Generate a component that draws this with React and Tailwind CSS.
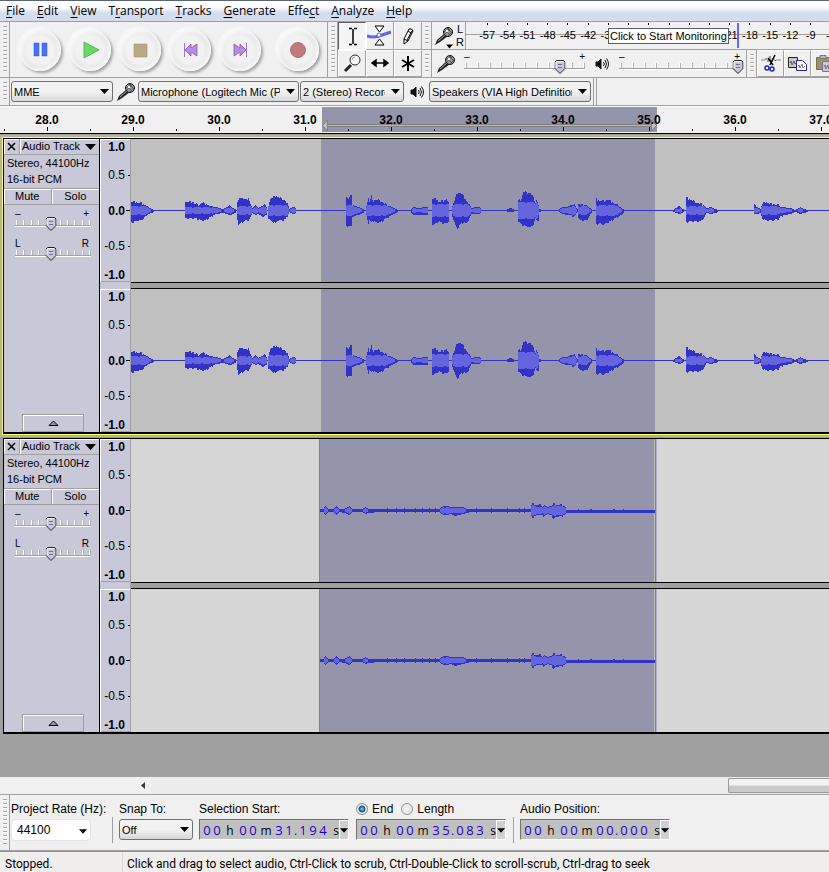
import { useState } from 'react';

const menus = [
  ['', 'F', 'ile'],
  ['', 'E', 'dit'],
  ['', 'V', 'iew'],
  ['T', 'r', 'ansport'],
  ['', 'T', 'racks'],
  ['', 'G', 'enerate'],
  ['Effe', 'c', 't'],
  ['', 'A', 'nalyze'],
  ['', 'H', 'elp'],
];

// each burst: cap of the rms part, then [x, up, down] points of the peak envelope
const speech = [
  { rms: 4, points: [[0, 8, 11], [5, 8, 10], [6, 7, 9], [10, 7, 9], [13, 5, 6], [17, 3, 3], [20, 1, 2], [23, 0, 1]] },
  { rms: 3, points: [[54, 8, 7], [62, 8, 7], [63, 6, 7], [68, 5, 8], [70, 7, 9], [74, 6, 9], [78, 4, 6], [85, 3, 3], [91, 1, 2], [96, 3, 3], [98, 5, 4], [100, 3, 4], [105, 0, 1]] },
  { rms: 4, points: [[106, 8, 8], [107, 9, 13], [109, 13, 12], [112, 11, 10], [115, 10, 9], [117, 12, 9], [119, 6, 6], [121, 2, 2], [124, 5, 4], [127, 2, 3], [131, 4, 5], [133, 6, 5], [136, 2, 3]] },
  { rms: 5, points: [[137, 5, 7], [139, 11, 9], [144, 14, 12], [146, 13, 9], [151, 11, 9], [154, 9, 8], [157, 4, 3], [158, 1, 1], [161, 3, 3], [163, 3, 3], [165, 0, 1]] },
  { rms: 5, points: [[215, 13, 15], [217, 11, 14], [219, 14, 15], [220, 14, 15], [221, 5, 5], [227, 3, 4], [233, 0, 1]] },
  { rms: 5, points: [[235, 4, 4], [237, 12, 12], [238, 8, 9], [240, 14, 11], [241, 9, 9], [245, 10, 11], [249, 9, 11], [253, 6, 8], [258, 4, 5], [264, 1, 2], [267, 0, 1]] },
  { rms: 3, points: [[280, 1, 2], [282, 3, 4], [287, 2, 4], [294, 3, 4], [296, 3, 4], [297, 0, 1]] },
  { rms: 6, points: [[301, 11, 13], [305, 11, 12], [307, 8, 10], [312, 9, 12], [315, 11, 12], [317, 7, 10], [318, 1, 1]] },
  { rms: 6, points: [[321, 4, 5], [324, 12, 14], [326, 17, 17], [329, 17, 13], [332, 14, 11], [335, 9, 12], [338, 5, 7], [340, 2, 3], [346, 3, 3], [348, 3, 3], [350, 0, 1]] },
  { rms: 1, points: [[376, 1, 1], [380, 2, 1], [383, 0, 1]] },
  { rms: 8, points: [[387, 9, 10], [390, 11, 13], [392, 18, 14], [396, 17, 15], [399, 17, 16], [402, 12, 13], [404, 7, 7], [405, 10, 9], [407, 5, 9], [408, 1, 1], [410, 0, 1]] },
  { rms: 4, points: [[428, 1, 1], [431, 3, 3], [436, 3, 4], [439, 5, 4], [443, 5, 5], [445, 2, 2], [446, 1, 1], [447, 6, 6], [449, 5, 9], [455, 5, 9], [457, 3, 6], [460, 1, 2], [461, 0, 1]] },
  { rms: 5, points: [[465, 11, 13], [468, 9, 12], [472, 9, 13], [477, 10, 11], [482, 7, 8], [487, 4, 5], [491, 1, 3], [493, 0, 1]] },
  { rms: 2, points: [[542, 0, 1], [546, 3, 2], [548, 4, 3], [550, 2, 2], [553, 0, 1]] },
  { rms: 4, points: [[555, 12, 11], [558, 11, 10], [563, 8, 10], [569, 6, 10], [573, 4, 6], [575, 2, 2], [580, 3, 3], [583, 1, 2], [587, 0, 1]] },
  { rms: 4, points: [[623, 6, 3], [625, 3, 3], [629, 1, 2], [631, 6, 7], [634, 8, 9], [639, 6, 9], [647, 5, 8], [649, 3, 5], [659, 2, 3], [664, 0, 1], [669, 3, 3], [672, 1, 2], [677, 0, 1]] },
];

const quiet = [
  { rms: 3, points: [[189, 1, 1], [192, 1, 1], [194, 4, 4], [197, 1, 1], [202, 1, 1], [205, 4, 4], [208, 1, 1], [213, 1, 2], [218, 4, 4], [221, 1, 1], [231, 1, 1], [234, 3, 3], [237, 1, 2], [247, 1, 1]] },
  { rms: 0, points: [[247, 1, 1], [308, 1, 1]] },
  { rms: 3, points: [[308, 1, 1], [310, 3, 3], [314, 4, 4], [320, 3, 3], [323, 3, 5], [331, 3, 3], [335, 1, 2], [340, 1, 1]] },
  { rms: 0, points: [[336, 1, 1], [399, 1, 1]] },
  { rms: 5, points: [[399, 1, 1], [400, 5, 5], [402, 6, 6], [405, 5, 4], [409, 5, 4], [411, 3, 4], [413, 5, 5], [416, 3, 3], [420, 4, 4], [422, 6, 7], [426, 5, 5], [431, 5, 5], [434, 3, 3], [435, 1, 1]] },
  { rms: 0, points: [[435, 0, 2], [524, 0, 2]] },
];

// lone pixels that stick out of the noise floor
const specks = [256, 265, 273, 284, 291, 298, 304, 345, 360, 376, 388, 393, 447, 459, 460, 482, 483, 492];

function columnsOf({ rms, points }) {
  const cols = [];
  for (let i = 0; i < points.length - 1; i++) {
    const [x0, u0, d0] = points[i];
    const [x1, u1, d1] = points[i + 1];
    for (let x = x0; x < x1; x++) {
      const t = (x - x0) / (x1 - x0);
      let up = Math.round(u0 + (u1 - u0) * t);
      let down = Math.round(d0 + (d1 - d0) * t);
      const inner = Math.max(0, Math.min(rms - (x % 9 > 6 ? 1 : 0), up - 1, down - 1));
      if (up > 4) up += [0, 0, 1, 1, -1, 0, 0][x % 7];
      if (down > 4) down += [0, 1, 1, 0, 0][x % 5];
      cols.push({ x, up, down, inner });
    }
  }
  return cols;
}

const pathOf = (cols, up, down) =>
  cols.map((c) => `M${c.x} ${71 - up(c)}h1V${72 + down(c)}h-1z`).join('');

const speechCols = speech.flatMap(columnsOf);
const quietCols = [
  ...quiet.flatMap(columnsOf),
  ...specks.map((x) => ({ x, up: x > 435 ? 1 : 2, down: 2, inner: 0 })),
];

function Wave({ cols, selected, line }) {
  return (
    <svg className="block w-full h-[143px]" shapeRendering="crispEdges" aria-hidden="true">
      <rect x={selected[0]} width={selected[1] - selected[0]} height="143" fill="#9494aa" />
      {!line && (
        <>
          <rect x="188" width="1" height="143" fill="#808080" />
          <rect x="523" width="1" height="143" fill="#c0c0c0" />
          <rect x="524" width="1" height="143" fill="#808080" />
          <rect x="525" width="1" height="143" fill="#b0b0c0" />
        </>
      )}
      {line && <rect y="71" width="100%" height="1" fill="#3232c8" />}
      <path d={pathOf(cols, (c) => c.up, (c) => c.down)} fill="#3232c8" />
      <path d={pathOf(cols.filter((c) => c.inner > 0), (c) => c.inner, (c) => c.inner)} fill="#6464dc" />
    </svg>
  );
}

function Grip() {
  return (
    <div className="w-[10px] shrink-0 self-stretch py-1 pl-[3px] pr-[2px] border-r border-[#a0a0a0]">
      <div className="h-full bg-[repeating-linear-gradient(to_bottom,#a8a8a8_0px,#a8a8a8_1px,#ffffff_1px,#ffffff_2px,#f0f0f0_2px,#f0f0f0_4px)]" />
    </div>
  );
}

function Mic() {
  return (
    <svg className="shrink-0" width="20" height="20" viewBox="0 0 20 20" aria-hidden="true">
      <path d="M1 19 L3 14 L11 7 L14 10 L6 16 Z" fill="#222" />
      <path d="M4 15 L11 9" stroke="#aaa" strokeWidth="1" />
      <circle cx="14" cy="6" r="4.5" fill="#999" stroke="#111" />
      <path d="M11 4l5 5M13 2l5 5M11 8l6-6M10 6l5-4M14 10l4-4" stroke="#333" strokeWidth=".7" />
      <circle cx="13" cy="5" r="1.3" fill="#eee" />
    </svg>
  );
}

function Speaker() {
  return (
    <svg className="shrink-0" width="14" height="14" viewBox="0 0 14 14" fill="none" stroke="#111" aria-hidden="true">
      <path d="M1 5h2l3-3v10l-3-3H1z" fill="#111" />
      <path d="M8.500 5q1.500 2 0 4M10 3q3 4 0 8M11.500 1.500q4 5.500 0 11" />
    </svg>
  );
}

function Caret({ className }) {
  return (
    <svg className={className} width="9" height="5" viewBox="0 0 9 5" aria-hidden="true">
      <path d="M0 0h9L4.500 5z" fill="#000" />
    </svg>
  );
}

function Combo({ label, value, className }) {
  return (
    <div className={`relative shrink-0 ${className}`}>
      <select
        aria-label={label}
        className="block w-full h-[21px] pl-[2px] pr-[18px] appearance-none rounded-[3px] border border-[#707070] bg-linear-to-b from-[#f2f2f2] from-50% to-[#d8d8d8] to-100% font-[Liberation_Sans,Arial,sans-serif] text-[11px] leading-[18px] text-black overflow-hidden"
      >
        <option>{value}</option>
      </select>
      <Caret className="absolute right-1 top-2 pointer-events-none" />
    </div>
  );
}

const round = {
  Pause: <path d="M13 12h5v13h-5zM21 12h5v13h-5z" fill="#4a72f0" stroke="#2f50d0" strokeWidth=".5" />,
  Play: <path d="M13 11v16l15-8z" fill="#6cd868" stroke="#4aa84a" strokeWidth=".8" />,
  Stop: <path d="M13 13h13v13H13z" fill="#b9aa86" stroke="#a09070" strokeWidth=".6" />,
  'Skip to Start': <path d="M13.500 12v14M20 13l-6 6 6 6v-4l6 4V13l-6 4z" fill="#b98ae0" stroke="#8658b8" strokeWidth=".8" />,
  'Skip to End': <path d="M25.500 12v14M19 13l6 6-6 6v-4l-6 4V13l6 4z" fill="#b98ae0" stroke="#8658b8" strokeWidth=".8" />,
  Record: <circle cx="19" cy="19" r="7.500" fill="#c07c7c" stroke="#a06060" strokeWidth=".8" />,
};

function RoundButton({ name, onClick }) {
  return (
    <button
      aria-label={name}
      onClick={onClick}
      className="w-[42px] h-[42px] rounded-full bg-radial from-[#f2f2f2] from-45% to-[#e4e4e4] to-62% shadow-[2px_2px_3px_#a0a0a0,-1px_-1px_3px_#ffffff,inset_3px_3px_4px_#fafafa,inset_-2px_-2px_4px_#fafafa]"
    >
      <svg width="42" height="42" viewBox="-2 -2 42 42">{round[name]}</svg>
    </button>
  );
}

const tools = [
  ['Selection Tool', <path d="M10 5.500h3M15 5.500h3M14 6v15M10 21.500h3M15 21.500h3" fill="none" stroke="#000" strokeWidth="1.500" />],
  ['Envelope Tool', (
    <>
      <path d="M0 13q6 2 12 0t12-4" fill="none" stroke="#6464dc" strokeWidth="3" />
      <path d="M8 3h9l-4.500 6zM8 22h9l-4.500-6z" fill="#fff" stroke="#000" />
      <circle cx="12" cy="12" r="2" fill="#fff" stroke="#6464dc" />
    </>
  )],
  ['Draw Tool', <path d="M9 21v-5l5-10q3-1 4 2l-5 10zM9 16l4 2M13 8l3 2M12 17l5-9" fill="#fff" stroke="#000" />],
  ['Zoom Tool', (
    <>
      <path d="M6 21l6-6" stroke="#222" strokeWidth="3" />
      <circle cx="16" cy="10" r="5" fill="#fff" stroke="#222" />
      <path d="M13 10q0-3 3-3" fill="none" stroke="#999" />
    </>
  )],
  ['Time Shift Tool', <path d="M6 13h13M9 10l-4 3 4 3zM17 10l4 3-4 3z" fill="#000" stroke="#000" strokeWidth="1.500" />],
  ['Multi-Tool', <path d="M13 6v15M7 10l12 7M19 10L7 17" stroke="#000" strokeWidth="2" />],
];

function Slider({ label, start, right, ticks, min = '–', max = '+', className }) {
  const [value, setValue] = useState(start);
  return (
    <div className={`relative h-6 shrink-0 text-[10px] leading-[10px] ${className}`}>
      <div className="flex justify-between">
        <span>{min}</span>
        <span className={right}>{max}</span>
      </div>
      <div className="absolute inset-x-0 top-[11px] h-[5px] flex justify-between px-px">
        {Array.from({ length: ticks }, (_, i) => (
          <i key={i} className="w-px h-full bg-white shadow-[1px_0_0_#b4b4b4]" />
        ))}
      </div>
      <div className="absolute inset-x-0 top-[16px] h-[2px] bg-[#a0a0a0] border-b border-white" />
      <div className="absolute inset-x-0 top-[8px]">
        <svg className="-translate-x-1/2 relative" style={{ left: `${value}%` }} width="11" height="14" viewBox="0 0 11 14">
          <path d="M2 .5h7L10.500 2v6.500l-5 5-5-5V2z" fill="#c8c8dc" stroke="#222" />
          <path d="M1.500 8V2.500L2.500 1.500h6" fill="none" stroke="#fff" />
          <path d="M3.500 4.500h4M3.500 7.500h4" stroke="#70708a" />
        </svg>
      </div>
      <input
        type="range"
        aria-label={label}
        value={value}
        onChange={(e) => setValue(Number(e.target.value))}
        className="absolute inset-0 w-full h-full opacity-0"
      />
    </div>
  );
}

function RecordMeter() {
  const marks = Array.from({ length: 18 }, (_, i) => -57 + i * 3);
  return (
    <div className="flex items-center h-7 border-b border-[#a0a0a0]">
      <Grip />
      <div className="relative flex items-center gap-[2px] w-[33px] shrink-0 pl-[2px]">
        <Mic />
        <Caret className="absolute left-[14px] bottom-0 w-[7px]" />
        <div className="flex flex-col items-center text-[11px] leading-[13px]">
          <span>L</span>
          <span>R</span>
        </div>
      </div>
      <div className="relative flex-1 h-full min-w-0 border-l border-[#a0a0a0]">
        <div className="h-[13px] border-b border-[#a0a0a0]" />
        <div className="absolute inset-y-0 left-[11px] w-[364px] flex text-[11px] leading-[26px]">
          {marks.map((m) => (
            <span key={m} className="flex-1 text-center bg-[linear-gradient(#000,#000)] bg-[length:1px_2px] bg-position-[50%_1px] bg-no-repeat">
              {m}
            </span>
          ))}
        </div>
        <div className="absolute left-[271px] top-px w-[2px] h-[25px] bg-[#6464ff]" />
        <button className="absolute left-[142px] top-[6px] h-[16px] px-px border border-[#606060] bg-white text-[11px] leading-[14px] whitespace-nowrap">
          Click to Start Monitoring
        </button>
      </div>
    </div>
  );
}

const edits = [
  ['Cut', (
    <>
      <path d="M1 7h4l1-2 2 4 2-6 1 6 2-4 2 3 1-1h5" fill="none" stroke="#888" />
      <path d="M15 2l-5 10M8 5l5 7" stroke="#000" strokeWidth="1.500" />
      <circle cx="7" cy="15" r="2" fill="none" stroke="#2020c0" strokeWidth="1.500" />
      <circle cx="12" cy="16" r="2" fill="none" stroke="#2020c0" strokeWidth="1.500" />
    </>
  )],
  ['Copy', (
    <>
      <path d="M1.500 4.500h9v10h-9z" fill="#c8c8c8" stroke="#222" />
      <path d="M3 10l1-2 1 4 2-4 1 3 1-1" fill="none" stroke="#444" strokeWidth=".8" />
      <path d="M9.500 7.500h6l4 4v6h-10z" fill="#fff" stroke="#2020c0" />
      <path d="M11 13l1-1 1 3 2-4 1 4 2-2" fill="none" stroke="#555" strokeWidth=".8" />
    </>
  )],
  ['Paste', (
    <>
      <path d="M2.500 4.500h13v12h-13z" fill="#9a9270" stroke="#77704f" />
      <path d="M6 2.500h6v3H6z" fill="#bbb" stroke="#777" />
      <path d="M8.500 8.500h8l3 3v7h-11z" fill="#c8c8d0" stroke="#77779a" />
      <path d="M10 14l1-2 1 4 2-4 1 4 2-3" fill="none" stroke="#777" />
    </>
  )],
];

function Toolbars() {
  const [tool, setTool] = useState('Selection Tool');
  return (
    <div className="flex h-14 border-b border-[#a0a0a0] overflow-hidden">
      <Grip />
      <div className="flex items-center gap-2 pl-[9px] w-[318px] shrink-0 border-r border-[#a0a0a0]">
        {['Pause', 'Play', 'Stop', 'Skip to Start', 'Skip to End'].map((name) => (
          <RoundButton key={name} name={name} />
        ))}
        <div className="pl-2 flex">
          <RoundButton name="Record" />
        </div>
      </div>
      <div className="flex">
        <Grip />
      </div>
      <div className="grid grid-cols-3 grid-rows-2 w-[84px] shrink-0">
        {tools.map(([name, icon]) => (
          <button
            key={name}
            aria-label={name}
            onClick={() => setTool(name)}
            className={`flex items-center justify-center border ${
              tool === name
                ? 'border-t-[#606060] border-l-[#606060] border-r-white border-b-white bg-[#f4f4f4]'
                : 'border-t-white border-l-white border-r-[#a0a0a0] border-b-[#a0a0a0]'
            }`}
          >
            <svg width="26" height="26" viewBox="0 0 26 26">{icon}</svg>
          </button>
        ))}
      </div>
      <div className="flex-1 min-w-0">
        <RecordMeter />
        <div className="flex items-center h-[27px]">
          <Grip />
          <div className="flex w-8 shrink-0 pl-1">
            <Mic />
          </div>
          <Slider label="Recording Volume" start={79} ticks={11} className="w-[121px]" />
          <div className="w-[34px] shrink-0 flex justify-center">
            <Speaker />
          </div>
          <Slider label="Playback Volume" start={98} ticks={11} className="w-[121px]" />
          <div className="ml-[6px] flex self-stretch border-l border-[#a0a0a0]">
            <Grip />
          </div>
          {edits.map(([name, icon]) => (
            <button key={name} aria-label={name} className="w-[27px] h-full shrink-0 flex items-center justify-center border border-t-white border-l-white border-r-[#a0a0a0] border-b-[#a0a0a0]">
              <svg className="shrink-0" width="21" height="21" viewBox="0 0 21 21">{icon}</svg>
            </button>
          ))}
        </div>
      </div>
    </div>
  );
}

function DeviceBar() {
  return (
    <div className="flex items-center h-7 border-b border-[#a0a0a0]">
      <Grip />
      <div className="flex items-center h-full pl-px pr-[2px] border-r border-[#a0a0a0]">
        <Combo label="Audio Host" value="MME" className="w-[102px]" />
        <div className="w-[25px] flex justify-center">
          <Mic />
        </div>
        <Combo label="Recording Device" value="Microphone (Logitech Mic (Pro" className="w-[161px]" />
        <Combo label="Recording Channels" value="2 (Stereo) Recording" className="w-[104px] ml-px" />
        <div className="w-[25px] flex justify-center">
          <Speaker />
        </div>
        <Combo label="Playback Device" value="Speakers (VIA High Definition" className="w-[162px]" />
      </div>
      <div className="ml-[2px] h-full border-l border-[#a0a0a0]" />
    </div>
  );
}

function Timeline() {
  const seconds = [28, 29, 30, 31, 32, 33, 34, 35, 36, 37];
  return (
    <div className="relative h-7 border-b border-black border-t border-t-white overflow-hidden">
      <div className="absolute left-[322px] top-0 bottom-px w-[335px] bg-[#9494aa]">
        <svg className="block" width="335" height="25" aria-hidden="true">
          <path d="M4.500 17.500h326v2h-326z" fill="#b8b8b8" stroke="#808080" />
          <path d="M5.500 13v11L.5 18.500zM329.500 13v11l5-5.500z" fill="#c0c0c0" stroke="#808080" />
        </svg>
      </div>
      <div className="relative flex pl-1 h-[26px]">
        {seconds.map((s) => (
          <div
            key={s}
            className="w-[86px] h-[24px] shrink-0 text-center font-bold text-[12px] leading-[26px] bg-[linear-gradient(#000,#000),linear-gradient(#000,#000)] bg-[length:1px_4px,1px_2px] bg-position-[50%_100%,0%_100%] bg-no-repeat"
          >
            {s}.0
          </div>
        ))}
      </div>
    </div>
  );
}

function Scale() {
  return (
    <div className="w-[30px] h-[143px] grid grid-rows-[15px_42px_29px_42px_15px] items-center text-right text-[12px] leading-[14px] bg-[#c8c8d8] border-l border-l-white shadow-[inset_0_1px_0_#ffffff,inset_0_-1px_0_#a0a0a0]">
      <b className="pr-[5px]">1.0</b>
      <span className="pr-[5px] bg-[linear-gradient(#000,#000)] bg-[length:2px_1px] bg-position-[100%_50%] bg-no-repeat">0.5</span>
      <b className="pr-[5px] bg-[linear-gradient(#000,#000)] bg-[length:4px_1px] bg-position-[100%_50%] bg-no-repeat">0.0</b>
      <span className="pr-[5px] bg-[linear-gradient(#000,#000)] bg-[length:2px_1px] bg-position-[100%_50%] bg-no-repeat">-0.5</span>
      <b className="pr-[5px]">-1.0</b>
    </div>
  );
}

function Track({ cols, selected, line, background }) {
  return (
    <div className="flex border-t border-l border-b-2 border-black bg-[#c8c8d8]">
      <div className="w-24 shrink-0 flex flex-col border-r border-black text-[11px]">
        <div className="flex h-4 border-b border-[#a0a0a0]">
          <button aria-label="Close" className="w-4 flex items-center justify-center border-r border-[#a0a0a0] shadow-[inset_1px_1px_0_#ffffff]">
            <svg width="9" height="9" viewBox="0 0 9 9">
              <path d="M1 1l7 7M8 1L1 8" stroke="#000" strokeWidth="1.500" />
            </svg>
          </button>
          <button className="flex-1 flex items-center justify-between pl-[2px] pr-[3px] leading-[15px] whitespace-nowrap shadow-[inset_1px_1px_0_#ffffff]">
            Audio Track
            <svg width="11" height="6" viewBox="0 0 11 6">
              <path d="M0 0h11L5.500 6z" fill="#000" />
            </svg>
          </button>
        </div>
        <div className="h-[33px] pl-[3px] leading-4 whitespace-nowrap">
          <p>Stereo, 44100Hz</p>
          <p>16-bit PCM</p>
        </div>
        <div className="grid grid-cols-2 h-[17px] border-y border-[#a0a0a0] leading-[15px]">
          <button className="border-r border-[#a0a0a0] shadow-[inset_1px_1px_0_#ffffff]">Mute</button>
          <button className="shadow-[inset_1px_1px_0_#ffffff]">Solo</button>
        </div>
        <div className="pt-1 pl-[11px]">
          <Slider label="Gain" start={48} ticks={11} className="w-[76px]" right="pr-[2px]" />
          <div className="pt-[6px]">
            <Slider label="Pan" start={48} ticks={11} min="L" max="R" className="w-[76px]" right="pr-[2px]" />
          </div>
        </div>
        <button aria-label="Collapse" className="mt-auto ml-[18px] mr-[15px] h-[18px] flex items-center justify-center border border-[#a0a0a0] shadow-[inset_1px_1px_0_#ffffff]">
          <svg width="11" height="6" viewBox="0 0 11 6">
            <path d="M1 5.500h9L5.500 1z" fill="#9494aa" stroke="#000" />
          </svg>
        </button>
      </div>
      <div className="flex flex-col gap-[7px] shrink-0">
        <Scale />
        <Scale />
      </div>
      <div className="flex-1 min-w-0 border-l border-[#a0a0a0]">
        <div className={background}>
          <Wave cols={cols} selected={selected} line={line} />
        </div>
        <div className="h-[7px] border-y border-black bg-[#a0a0a0]" />
        <div className={background}>
          <Wave cols={cols} selected={selected} line={line} />
        </div>
      </div>
    </div>
  );
}

function TimeField({ label, value }) {
  return (
    <div role="group" aria-label={label} className="flex w-[150px] h-[21px] border border-t-[#707070] border-l-[#707070] border-b-white border-r-white bg-[#c0c0c0] pl-[2px] font-[Open_Sans,sans-serif] text-[12px] leading-[21px]">
      {value.split('').map((c, i) => {
        if (c === '.') return <span key={i} className="w-1 shrink-0 text-[#1e00c8]">.</span>;
        if (/\d/.test(c)) {
          return (
            <input
              key={i}
              aria-label={`${label} digit`}
              defaultValue={c}
              maxLength={1}
              className="w-[10px] h-[21px] shrink-0 p-0 text-center text-[13px] text-[#1e00c8] outline-none"
            />
          );
        }
        return <span key={i} className={c === 's' ? 'w-[11px] shrink-0 text-right' : 'w-4 shrink-0 text-center'}>{c}</span>;
      })}
      <button aria-label={`${label} format`} className="ml-auto w-[10px] flex items-center justify-center bg-[#d0d0d0] border-l border-t border-white">
        <Caret className="w-2 shrink-0" />
      </button>
    </div>
  );
}

function SelectionBar() {
  const [mode, setMode] = useState('End');
  return (
    <div className="flex h-14 border-b border-[#a0a0a0] text-[12px] leading-4">
      <Grip />
      <div className="flex pl-px pt-[6px]">
        <div className="w-[101px]">
          <label htmlFor="rate" className="block whitespace-nowrap">Project Rate (Hz):</label>
          <div className="relative w-20 mt-[2px]">
            <select id="rate" className="block w-full h-[22px] pl-[5px] appearance-none border border-[#e2e3ea] rounded-sm bg-white text-[12px]">
              <option>44100</option>
            </select>
            <Caret className="absolute right-1 top-[10px] w-2 pointer-events-none" />
          </div>
        </div>
        <div className="w-[7px] h-[26px] mt-4 border-l border-[#a0a0a0]" />
        <div className="w-20">
          <span className="block">Snap To:</span>
          <Combo label="Snap To" value="Off" className="w-[74px] mt-[2px]" />
        </div>
        <div className="w-[157px]">
          <span className="block mb-[2px]">Selection Start:</span>
          <TimeField label="Selection Start" value="00h00m31.194s" />
        </div>
        <div className="w-[157px]">
          <div className="flex gap-2 mb-[2px]">
            {['End', 'Length'].map((m) => (
              <label key={m} className="flex items-center gap-1">
                <input
                  type="radio"
                  name="mode"
                  checked={mode === m}
                  onChange={() => setMode(m)}
                  className="w-3 h-3 appearance-none rounded-full border border-[#8e8f8f] bg-radial from-[#fafafa] to-[#d0d0d0] shadow-[inset_0_0_0_1px_#f4f4f4] checked:from-[#5cc8f0] checked:from-10% checked:via-[#0b4a7a] checked:via-40% checked:to-[#e0e0e0] checked:to-55%"
                />
                {m}
              </label>
            ))}
          </div>
          <TimeField label={mode} value="00h00m35.083s" />
        </div>
        <div className="w-[7px] h-[26px] mt-4 border-l border-[#a0a0a0]" />
        <div>
          <span className="block mb-[2px]">Audio Position:</span>
          <TimeField label="Audio Position" value="00h00m00.000s" />
        </div>
      </div>
    </div>
  );
}

export default function App() {
  return (
    <div className="min-h-screen flex flex-col overflow-hidden bg-[#f0f0f0] text-black font-[Liberation_Sans,Arial,sans-serif]">
      <nav className="flex items-center h-[22px] border-t border-t-[#5a6478] border-b border-b-[#a0a0a0] bg-linear-to-b from-white from-30% to-[#d5dcee] to-60% font-[Open_Sans,sans-serif] text-[12px] leading-5">
        {menus.map(([before, key, after]) => (
          <button key={key + after} className="px-[6px]">
            {before}
            <u className="underline-offset-2">{key}</u>
            {after}
          </button>
        ))}
      </nav>
      <Toolbars />
      <DeviceBar />
      <Timeline />
      <main className="flex-1 bg-[#a0a0a0] pt-px">
        <div className="border-2 border-r-0 border-[#b8b78c]">
          <div className="border border-r-0 border-[#ffff64]">
            <Track cols={speechCols} selected={[190, 524]} line background="bg-[#c0c0c0]" />
          </div>
        </div>
        <div className="pt-px pl-[3px]">
          <Track cols={quietCols} selected={[189, 523]} background="bg-[#d6d6d6]" />
        </div>
      </main>
      <div className="h-[18px] flex pl-[135px] border-b border-[#a0a0a0]">
        <div className="flex-1 flex items-center justify-between bg-[#ececec]">
          <button aria-label="Scroll left" className="w-4 h-full flex items-center justify-center bg-[#f0f0f0]">
            <svg width="4" height="7" viewBox="0 0 4 7">
              <path d="M4 0v7L0 3.500z" fill="#333" />
            </svg>
          </button>
          <div className="w-[101px] h-[15px] rounded-l-[2px] border border-r-0 border-[#989898] bg-linear-to-b from-[#f2f2f2] from-45% to-[#c8cacc] to-55%" />
        </div>
      </div>
      <SelectionBar />
      <footer className="flex h-[21px] border-t border-[#909090] bg-[#f0eded] font-[Roboto,sans-serif] text-[12px] leading-6 whitespace-nowrap">
        <span className="w-[123px] pl-[5px] border-r border-[#d8d8d8]">Stopped.</span>
        <span className="pl-1">Click and drag to select audio, Ctrl-Click to scrub, Ctrl-Double-Click to scroll-scrub, Ctrl-drag to seek</span>
      </footer>
    </div>
  );
}
